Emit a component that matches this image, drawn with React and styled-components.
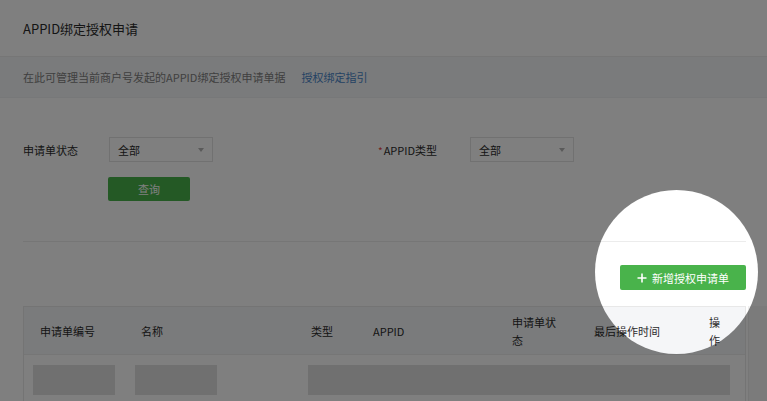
import React from 'react';
import styled, { createGlobalStyle } from 'styled-components';

const GlobalStyle = createGlobalStyle`
    html, body {
        margin: 0;
        padding: 0;
        background: #fff;
    }
    body {
        font-family: "Noto Sans CJK SC", "Noto Sans", sans-serif;
        font-size: 11px;
        color: #333;
        overflow: hidden;
    }
`;

const Page = styled.div`
    position: relative;
    width: 767px;
    height: 401px;
    overflow: hidden;
    background: #fff;
`;

const Title = styled.div`
    height: 56px;
    padding-left: 23px;
    display: flex;
    align-items: center;
    font-size: 13px;
    color: #2b2b2b;
    border-bottom: 1px solid #ececec;
`;

const Notice = styled.div`
    height: 40px;
    padding-left: 23px;
    display: flex;
    align-items: center;
    gap: 16px;
    background: #f4f6f8;
    color: #808080;
    border-bottom: 1px solid #eef0f2;
`;

const Link = styled.a`
    color: #4a86c8;
    text-decoration: none;
`;

const Content = styled.div`
    padding: 39px 21px 0 23px;
`;

const FormRow = styled.div`
    display: flex;
    align-items: center;
`;

const FormItem = styled.div`
    width: 361px;
    display: flex;
    align-items: center;
`;

const Label = styled.label`
    width: 86px;
    flex-shrink: 0;
    white-space: nowrap;
    color: #2b2b2b;
`;

const Required = styled.span`
    color: #e64340;
    margin-left: -6px;
    margin-right: 1px;
    font-size: 10px;
`;

const Select = styled.div`
    width: 104px;
    height: 25px;
    box-sizing: border-box;
    border: 1px solid #e2e2e2;
    background: #fff;
    display: flex;
    align-items: center;
    justify-content: space-between;
    padding: 0 8px 0 8px;
    color: #2b2b2b;
`;

const Caret = styled.span`
    width: 0;
    height: 0;
    border-left: 3.5px solid transparent;
    border-right: 3.5px solid transparent;
    border-top: 4px solid #b5b5b5;
`;

const ButtonRow = styled.div`
    padding: 15px 0 0 ${({ $indent }) => $indent || 0}px;
    display: flex;
`;

const GreenButton = styled.button`
    width: ${({ $w }) => $w}px;
    height: ${({ $h }) => $h}px;
    border: 0;
    border-radius: 2px;
    background: #49b34b;
    color: #fff;
    font-family: inherit;
    font-size: 11px;
    display: flex;
    align-items: center;
    justify-content: center;
    gap: 5px;
    padding: 0;
`;

const Divider = styled.div`
    margin-top: 40px;
    border-top: 1px solid #ececec;
`;

const ActionBar = styled.div`
    padding-top: 23px;
    display: flex;
    justify-content: flex-end;
`;

const TableArea = styled.div`
    margin-top: 16px;
    display: flex;
    margin-right: -21px;
`;

const Table = styled.div`
    width: 723px;
    flex-shrink: 0;
    border: 1px solid #e8e8e8;
    border-bottom: 0;
    box-sizing: border-box;
`;

const Filler = styled.div`
    flex: 1;
    margin-left: 2px;
    background: #f6f6f6;
    border-left: 1px solid #ededed;
`;

const cols = '101px 170px 62px 139px 82px 115px 52px';

const HeadRow = styled.div`
    display: grid;
    grid-template-columns: ${cols};
    height: 47px;
    background: #f5f6f8;
    border-bottom: 1px solid #ececec;
    align-items: center;
`;

const HeadCell = styled.div`
    padding: 0 16px;
    line-height: 18px;
    color: #2b2b2b;
`;

const BodyRow = styled.div`
    display: grid;
    grid-template-columns: ${cols};
    padding: 10px 0;
`;

const Skeleton = styled.div`
    height: 30px;
    background: #e0e0e0;
    margin-left: ${({ $ml }) => $ml}px;
    width: ${({ $w }) => ($w ? `${$w}px` : 'auto')};
    margin-right: ${({ $mr }) => $mr || 0}px;
    grid-column: ${({ $span }) => $span || 'auto'};
`;

const Spotlight = styled.div`
    position: absolute;
    left: 595px;
    top: 190px;
    width: 163px;
    height: 164px;
    border-radius: 50%;
    box-shadow: 0 0 0 1200px rgba(0, 0, 0, 0.5);
    pointer-events: none;
`;

const PlusIcon = () => (
    <svg width="10" height="10" viewBox="0 0 10 10">
        <path d="M5 0.5v9M0.5 5h9" stroke="#fff" strokeWidth="1.6" />
    </svg>
);

const headers = ['申请单编号', '名称', '类型', 'APPID', '申请单状态', '最后操作时间', '操作'];

export default function App() {
    return (
        <Page>
            <GlobalStyle />
            <Title>APPID绑定授权申请</Title>
            <Notice>
                <span>在此可管理当前商户号发起的APPID绑定授权申请单据</span>
                <Link href="#">授权绑定指引</Link>
            </Notice>

            <Content>
                <FormRow>
                    <FormItem>
                        <Label>申请单状态</Label>
                        <Select>
                            <span>全部</span>
                            <Caret />
                        </Select>
                    </FormItem>
                    <FormItem>
                        <Label>
                            <Required>*</Required>APPID类型
                        </Label>
                        <Select>
                            <span>全部</span>
                            <Caret />
                        </Select>
                    </FormItem>
                </FormRow>
                <ButtonRow $indent={85}>
                    <GreenButton $w={82} $h={24}>查询</GreenButton>
                </ButtonRow>

                <Divider />

                <ActionBar>
                    <GreenButton $w={126} $h={25}>
                        <PlusIcon />
                        新增授权申请单
                    </GreenButton>
                </ActionBar>

                <TableArea>
                    <Table>
                        <HeadRow>
                            {headers.map((h) => (
                                <HeadCell key={h}>{h}</HeadCell>
                            ))}
                        </HeadRow>
                        <BodyRow>
                            <Skeleton $ml={9} $w={82} />
                            <Skeleton $ml={10} $w={82} />
                            <Skeleton $ml={13} $mr={15} $span="3 / 8" />
                        </BodyRow>
                    </Table>
                    <Filler />
                </TableArea>
            </Content>

            <Spotlight />
        </Page>
    );
}
